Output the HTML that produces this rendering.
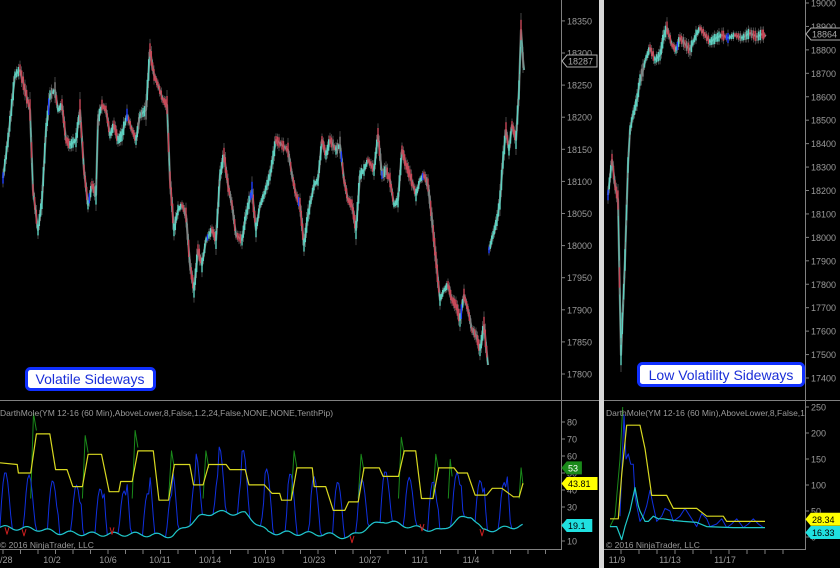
<!DOCTYPE html>
<html><head><meta charset="utf-8"><style>
html,body{margin:0;padding:0;background:#000;width:840px;height:568px;overflow:hidden}
svg{display:block}
text{font-family:"Liberation Sans",sans-serif;font-size:9px;fill:#9a9a9a}
</style></head><body>
<svg id="s" width="840" height="568" xmlns="http://www.w3.org/2000/svg">
<rect width="840" height="568" fill="#000"/>
<rect x="599" y="0" width="5" height="568" fill="#d8d8d8"/>
<g stroke="#808080" stroke-width="1" fill="none">
<line x1="561.5" y1="0" x2="561.5" y2="550"/>
<line x1="0" y1="400.5" x2="599" y2="400.5"/>
<line x1="0" y1="549.5" x2="561" y2="549.5"/>
<line x1="805.5" y1="0" x2="805.5" y2="550"/>
<line x1="604" y1="400.5" x2="840" y2="400.5"/>
<line x1="604" y1="549.5" x2="805" y2="549.5"/>
</g>
<g id="g"></g>
<rect x="26.5" y="368.5" width="128" height="21" rx="4" fill="#fff" stroke="#1030ff" stroke-width="3"/>
<text x="90" y="384" text-anchor="middle" style="font-size:14px;fill:#1a2ed8">Volatile Sideways</text>
<rect x="638.5" y="363.5" width="165" height="22" rx="4" fill="#fff" stroke="#1030ff" stroke-width="3"/>
<text x="721" y="380" text-anchor="middle" style="font-size:14px;fill:#1a2ed8">Low Volatility Sideways</text>
<text x="0" y="416" style="font-size:8.5px">DarthMole(YM 12-16 (60 Min),AboveLower,8,False,1.2,24,False,NONE,NONE,TenthPip)</text>
<text x="606" y="416" style="font-size:8.5px">DarthMole(YM 12-16 (60 Min),AboveLower,8,False,1</text>
<text x="0" y="548" style="font-size:8.5px">© 2016 NinjaTrader, LLC</text>
<text x="606" y="548" style="font-size:8.5px">© 2016 NinjaTrader, LLC</text>
</svg>
<script>
var g=document.getElementById('g'),NS='http://www.w3.org/2000/svg';
function el(t,a,txt){var e=document.createElementNS(NS,t);for(var k in a)e.setAttribute(k,a[k]);if(txt!=null)e.textContent=txt;g.appendChild(e);return e;}
function pl(pts,c,w){el('polyline',{points:pts.map(p=>p[0].toFixed(1)+','+p[1].toFixed(1)).join(' '),fill:'none',stroke:c,'stroke-width':w||1,'stroke-linejoin':'round'});}
for(var v=17800;v<=18350;v+=50){var y=374-(v-17800)*0.642;el('line',{x1:561,y1:y,x2:565,y2:y,stroke:'#808080'});el('text',{x:567,y:y+3.5},v);}
for(var v=17400;v<=19000;v+=100){var y=378-(v-17400)*(375/1600);el('line',{x1:805,y1:y,x2:809,y2:y,stroke:'#808080'});el('text',{x:811,y:y+3.5},v);}
for(var v=10;v<=80;v+=10){var y=541-(v-10)*1.7;el('line',{x1:561,y1:y,x2:565,y2:y,stroke:'#808080'});el('text',{x:567,y:y+3.5},v);}
for(var v=0;v<=250;v+=50){var y=537-v*0.52;el('line',{x1:805,y1:y,x2:809,y2:y,stroke:'#808080'});el('text',{x:811,y:y+3.5},v);}
[[0,'/28'],[52,'10/2'],[108,'10/6'],[160,'10/11'],[210,'10/14'],[264,'10/19'],[314,'10/23'],[370,'10/27'],[420,'11/1'],[471,'11/4']].forEach(d=>{el('text',{x:d[0],y:563,'text-anchor':d[0]?'middle':'start'},d[1]);});
for(var x=3;x<560;x+=17.5)el('line',{x1:x,y1:550,x2:x,y2:554,stroke:'#808080'});
[[617,'11/9'],[670,'11/13'],[725,'11/17']].forEach(d=>el('text',{x:d[0],y:563,'text-anchor':'middle'},d[1]));
for(var x=621;x<800;x+=18)el('line',{x1:x,y1:550,x2:x,y2:554,stroke:'#808080'});
var L=[[3,178],[8,140],[15,75],[20,70],[25,90],[30,110],[33,190],[38,230],[42,200],[46,130],[50,95],[55,90],[58,110],[62,105],[66,140],[70,145],[76,140],[80,110],[84,170],[88,205],[92,185],[96,195],[98,120],[102,105],[106,110],[110,135],[114,125],[118,140],[122,135],[127,115],[132,130],[136,140],[140,115],[146,110],[150,50],[154,75],[158,85],[163,100],[167,105],[170,180],[174,230],[178,210],[182,205],[186,215],[190,265],[194,290],[198,250],[202,265],[206,240],[212,230],[216,240],[220,175],[224,155],[228,185],[232,205],[236,235],[242,240],[246,215],[252,190],[256,230],[260,205],[264,195],[270,175],[276,140],[282,145],[288,150],[292,175],[296,195],[300,205],[304,245],[308,215],[314,185],[318,180],[322,140],[326,155],[330,140],[336,150],[340,145],[344,180],[348,200],[352,205],[356,230],[360,175],[364,170],[368,160],[374,170],[378,135],[382,175],[386,170],[390,180],[394,205],[398,200],[402,150],[406,165],[410,175],[416,195],[420,180],[424,175],[428,185],[432,220],[436,260],[440,300],[444,290],[448,285],[452,300],[456,305],[460,320],[464,295],[468,310],[472,330],[476,335],[480,350],[484,325],[488,365]];
var L2=[[489,250],[493,235],[497,220],[500,200],[503,160],[506,130],[509,150],[512,125],[516,140],[519,90],[521,30],[523,60],[524,70]];
var R=[[608,195],[612,160],[615,185],[618,200],[621,355],[625,260],[628,165],[630,130],[633,115],[637,100],[640,80],[643,70],[646,58],[650,48],[655,60],[660,55],[664,35],[667,28],[672,45],[676,50],[680,38],[685,44],[690,50],[696,35],[700,28],[705,35],[710,42],[716,38],[722,35],[728,38],[735,35],[742,38],[750,33],[757,37],[762,34],[766,36]];
function candles(P){pl(P,'#6a6a6a',2.2);pl(P,'#5fc8b8',1.2);for(var i=0;i<P.length-1;i++){var a=P[i],b=P[i+1],n=Math.max(1,Math.round((b[0]-a[0])/1.6));for(var j=0;j<n;j++){var t=j/n,x=a[0]+(b[0]-a[0])*t,y=a[1]+(b[1]-a[1])*t,dy=Math.min(20,Math.abs(b[1]-a[1])/n),h=3+((i*7+j*13)%6)+dy/2,c=(b[1]<a[1])?'#5fd0c0':'#c84858';if((i+j)%11==0)c='#808080';if((i*3+j)%29==0)c='#2040ff';el('line',{x1:x,y1:y-h,x2:x,y2:y+h,stroke:'#707070','stroke-width':0.6});el('line',{x1:x,y1:y-h*0.6,x2:x,y2:y+h*0.6,stroke:c,'stroke-width':1.4});}}}
candles(L);candles(L2);candles(R);
function tag(x,y,t,bg,fg,bd){el('path',{d:'M'+x+','+y+' l5,-6 h'+(t.length*5.2+4)+' v12 h-'+(t.length*5.2+4)+' z',fill:bg,stroke:bd||bg});el('text',{x:x+6,y:y+3.5,style:'fill:'+fg+';font-size:9px'},t);}
tag(562,61,'18287','#000','#aaa','#aaa');tag(806,34,'18864','#000','#aaa','#aaa');
var sx=2.61;function iy(v){return 541-(v-10)*1.7;}
var Y=[[0,56],[45,55],[48,50],[80,50],[95,73],[130,73],[145,52],[175,52],[190,42],[215,42],[230,61],[265,61],[285,39],[310,39],[315,45],[345,45],[360,63],[400,63],[415,34],[440,34],[455,55],[495,55],[505,43],[530,43],[545,55],[590,55],[600,52],[640,52],[650,43],[690,43],[710,38],[730,38],[735,34],[760,34],[775,53],[815,53],[820,42],[850,42],[870,28],[900,28],[910,33],[935,33],[950,53],[990,53],[1000,48],[1040,48],[1055,63],[1085,63],[1100,35],[1130,35],[1145,53],[1185,53],[1195,50],[1220,50],[1240,37],[1270,37],[1285,41],[1310,41],[1340,36],[1355,36],[1365,44]];
var B=[],C=[];
var cy=[[0,18],[100,17],[150,15],[250,14],[350,14],[450,13],[520,24],[560,27],[640,26],[700,15],[850,14],[910,12],[960,18],[1000,22],[1080,18],[1150,16],[1200,23],[1230,25],[1260,16],[1300,17],[1360,19]];
for(var x=0;x<=1365;x+=4){var k=0;while(k<cy.length-2&&cy[k+1][0]<x)k++;var a=cy[k],b=cy[k+1],t=Math.min(1,Math.max(0,(x-a[0])/(b[0]-a[0])));var c=a[1]+(b[1]-a[1])*t+Math.sin(x/9)*1.2;C.push([x/sx,iy(c)]);
var ph=(x%62)/62,bv=c+(ph<0.5?Math.sin(ph*2*Math.PI)*(24+((x*7)%15)):0);B.push([x/sx,iy(bv)]);}
[[80,95,85],[215,230,72],[345,360,75],[440,455,63],[530,545,63],[760,775,63],[935,950,61],[1040,1055,71],[1130,1145,61],[1170,1180,58],[1355,1365,53]].forEach(s=>pl([[s[0]/sx,iy(35)],[(s[0]+s[1])/2/sx,iy(s[2])],[s[1]/sx,iy(s[2]-10)]],'#1a8a1a',1));
pl(B,'#1030e0',1);pl(Y.map(p=>[p[0]/sx,iy(p[1])]),'#d8d820',1.2);pl(C,'#20c8c8',1.2);
[[5,18],[22,17],[110,18],[350,13],[420,20],[480,17]].forEach(p=>pl([[p[0],iy(p[1])],[p[0]+2,iy(p[1]-4)],[p[0]+4,iy(p[1])]],'#d02020',1));
tag(562,iy(53),'53','#1a8a1a','#fff');tag(562,iy(43.81),'43.81','#ffff00','#000');tag(562,iy(19.1),'19.1','#20e0e0','#000');
function ry(v){return 537-v*0.52;}function rx(p){return 600+p/3;}
pl([[30,20],[45,40],[60,150],[68,250]].map(p=>[rx(p[0]),ry(p[1])]),'#1a8a1a',1);
pl([[60,40],[72,235],[78,150],[85,160],[92,140],[100,140],[105,80],[110,60],[120,30],[130,40],[140,60],[150,90],[160,60],[170,30],[185,40],[195,55],[210,50],[220,30],[240,40],[255,55],[270,40],[290,20],[305,45],[320,35],[330,20],[350,25],[365,35],[380,18],[395,25],[410,35],[430,18],[445,25],[460,35],[475,25],[490,18]].map(p=>[rx(p[0]),ry(p[1])]),'#1030e0',1);
pl([[30,35],[55,35],[65,120],[80,215],[120,215],[135,170],[155,80],[200,80],[220,55],[290,55],[320,40],[370,40],[380,30],[495,30]].map(p=>[rx(p[0]),ry(p[1])]),'#d8d820',1.2);
pl([[30,20],[50,20],[65,-5],[75,20],[90,50],[105,95],[115,60],[120,50],[135,30],[145,30],[160,40],[175,35],[190,35],[220,32],[250,30],[290,28],[320,20],[400,18],[495,18]].map(p=>[rx(p[0]),ry(p[1])]),'#20c8c8',1.2);
tag(806,ry(28.34)-3,'28.34','#ffff00','#000');tag(806,ry(16.33)+4,'16.33','#20e0e0','#000');
</script>
</body></html>
